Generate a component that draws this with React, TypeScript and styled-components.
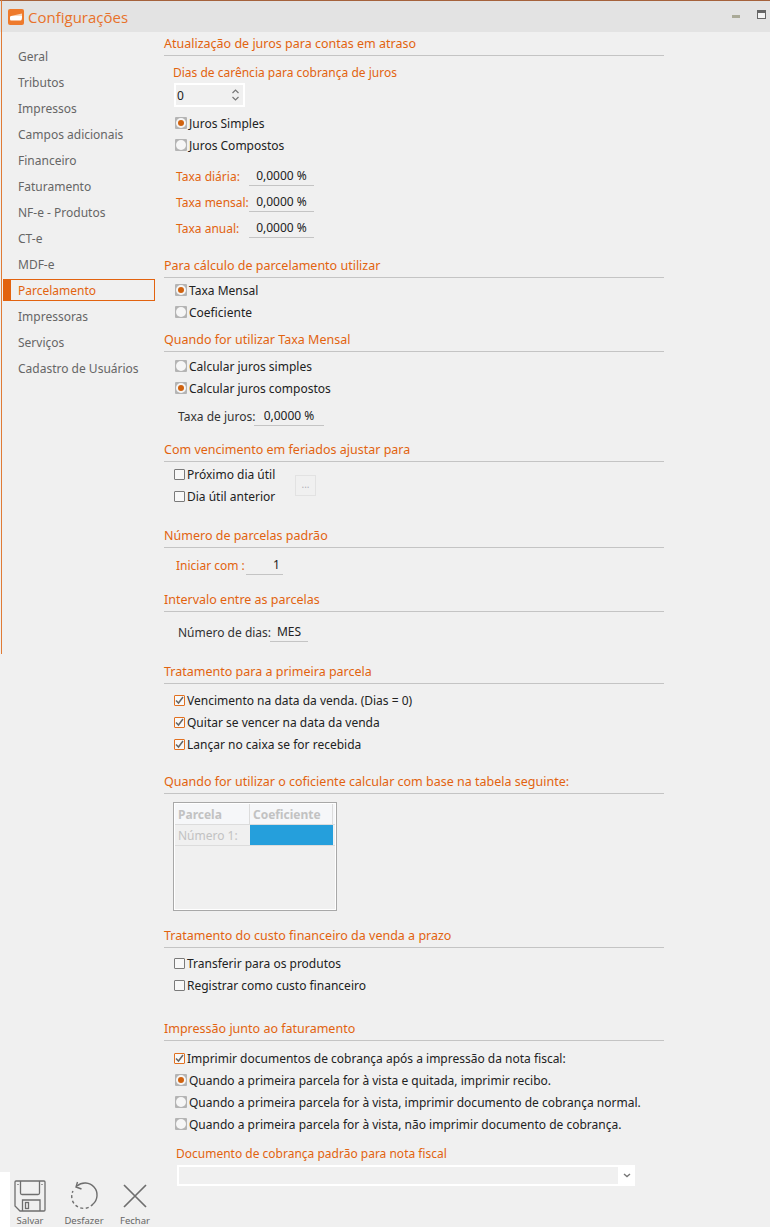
import React from 'react';
import styled, { createGlobalStyle } from 'styled-components';

const orange = '#e2630f';
const fontStack = '"Noto Sans", Verdana, sans-serif';

const GlobalStyle = createGlobalStyle`
  html, body {
    margin: 0;
    padding: 0;
    background: #f0f0f0;
  }
  * {
    box-sizing: border-box;
  }
`;

const Page = styled.div`
  position: relative;
  width: 770px;
  height: 1227px;
  overflow: hidden;
  background: #f0f0f0;
  font-family: ${fontStack};
  font-size: 12px;
  color: #222;
  white-space: nowrap;

  &::before {
    content: '';
    position: absolute;
    left: 1px;
    top: 0;
    width: 1px;
    height: 654px;
    background: #e07b35;
  }
`;

const TitleBar = styled.header`
  display: flex;
  align-items: center;
  height: 32px;
  padding: 0 4px 0 8px;
  background: #e3e3e3;
  border-top: 1px solid #a5623c;
`;

const AppTitle = styled.h1`
  flex: 1;
  margin: 0 0 0 4px;
  font-family: "Open Sans", sans-serif;
  font-size: 15px;
  font-weight: 400;
  color: #e8722a;
`;

const MinimizeButton = styled.span`
  width: 8px;
  height: 3px;
  margin-right: 17px;
  background: #aaaa98;
`;

const MaximizeButton = styled.span`
  width: 9px;
  height: 9px;
  margin-top: -5px;
  border: 1px solid #666;
  border-top-width: 3px;
  background: #f4f4f4;
`;

const Body = styled.div`
  display: flex;
  height: 1140px;
`;

const Sidebar = styled.nav`
  flex: none;
  display: flex;
  flex-direction: column;
  gap: 4px;
  width: 164px;
  padding: 13px 9px 0 3px;
`;

const SideItem = styled.div<{ $active?: boolean }>`
  display: flex;
  align-items: center;
  height: 22px;
  padding-left: ${(p) => (p.$active ? '7px' : '15px')};
  color: ${(p) => (p.$active ? orange : '#666')};
  border: ${(p) => (p.$active ? `1px solid ${orange}` : '0')};
  border-left: ${(p) => (p.$active ? `8px solid ${orange}` : '0')};
`;

const Content = styled.main`
  width: 500px;
`;

const Section = styled.section<{ $h: number }>`
  height: ${(p) => p.$h}px;
`;

const Heading = styled.h2`
  display: flex;
  align-items: center;
  height: 24px;
  margin: 0;
  font-size: 12.5px;
  font-weight: 400;
  color: ${orange};
  border-bottom: 1px solid #c4c4c4;
`;

const Group = styled.div<{ $mt: number }>`
  margin-top: ${(p) => p.$mt}px;
`;

const Line = styled.div<{ $x?: number }>`
  display: flex;
  align-items: center;
  height: 22px;
  padding-left: ${(p) => p.$x ?? 11}px;
`;

const OrangeLabel = styled.span<{ $w?: number }>`
  flex: none;
  width: ${(p) => (p.$w ? `${p.$w}px` : 'auto')};
  color: ${orange};
`;

const DarkLabel = styled.span<{ $w: number }>`
  flex: none;
  width: ${(p) => p.$w}px;
  color: #333;
`;

const Spinner = styled.div`
  display: flex;
  align-items: center;
  justify-content: space-between;
  width: 71px;
  height: 24px;
  margin-left: 10px;
  padding: 0 3px 0 1px;
  border: 2px solid #fff;
  font-size: 12px;
`;

const SpinArrows = styled.svg`
  width: 9px;
  height: 14px;
`;

const RadioMark = styled.span<{ $on?: boolean }>`
  flex: none;
  display: flex;
  align-items: center;
  justify-content: center;
  width: 12px;
  height: 12px;
  margin-right: 2px;
  border-radius: 1px;
  background: #b4b4b4;

  &::after {
    content: '';
    width: ${(p) => (p.$on ? '6px' : '10px')};
    height: ${(p) => (p.$on ? '6px' : '10px')};
    border-radius: 50%;
    background: ${(p) => (p.$on ? '#d0620f' : '#f6f6f6')};
    box-shadow: ${(p) => (p.$on ? '0 0 0 2px #f6f6f6' : 'none')};
  }
`;

const CheckMark = styled.span<{ $on?: boolean }>`
  flex: none;
  display: flex;
  align-items: center;
  justify-content: center;
  width: 11px;
  height: 11px;
  margin-right: 2px;
  border: 1px solid ${(p) => (p.$on ? '#e2701f' : '#7a7a7a')};
  border-radius: 1px;
  background: #f8f8f8;
`;

const FieldValue = styled.span<{ $w: number }>`
  flex: none;
  display: flex;
  align-items: center;
  justify-content: center;
  width: ${(p) => p.$w}px;
  height: 20px;
  font-size: 12px;
  color: #222;
  border-bottom: 1px solid #c4c4c4;
`;

const OffsetDigit = styled.span`
  margin-left: 24px;
`;

const FieldRow = styled.div<{ $x?: number }>`
  display: flex;
  align-items: center;
  height: 26px;
  padding-left: ${(p) => p.$x ?? 12}px;
`;

const HolidayRow = styled.div`
  display: flex;
  align-items: center;
`;

const HolidayOptions = styled.div`
  width: 131px;
`;

const DotsButton = styled.button`
  width: 21px;
  height: 21px;
  padding: 0 0 2px;
  font-family: inherit;
  font-size: 10px;
  color: #b0b0b8;
  background: #f0f0f0;
  border: 1px solid #e2e2e2;
`;

const CoefTable = styled.div`
  width: 164px;
  height: 109px;
  margin-left: 9px;
  border: 1px solid #a8a8a8;
  padding: 1px;
  box-shadow: inset 0 0 0 1px #fff;
`;

const TableRow = styled.div<{ $header?: boolean }>`
  display: grid;
  grid-template-columns: 75px 83px;
  height: 21px;
  background: ${(p) => (p.$header ? '#f6f7f9' : 'transparent')};
  border-bottom: 1px solid #dcdcdc;
`;

const TableCell = styled.div<{ $header?: boolean; $blue?: boolean }>`
  display: flex;
  align-items: center;
  padding-left: 3px;
  font-weight: ${(p) => (p.$header ? 700 : 400)};
  color: #c2c2c2;
  background: ${(p) => (p.$blue ? '#259fdc' : 'transparent')};
  border-right: ${(p) => (p.$header ? '1px solid #dcdcdc' : '0')};
`;

const DocSelect = styled.div`
  display: flex;
  justify-content: flex-end;
  width: 458px;
  height: 21px;
  margin: 1px 0 0 13px;
  border: 2px solid #fff;
`;

const SelectArrow = styled.div`
  display: flex;
  align-items: center;
  justify-content: center;
  width: 17px;
  margin: -2px -2px -2px 0;
  background: #fff;
`;

const Footer = styled.footer`
  display: flex;
  height: 55px;
  border-left: 10px solid #fff;
`;

const ToolButton = styled.div<{ $w: number }>`
  display: flex;
  flex-direction: column;
  align-items: center;
  width: ${(p) => p.$w}px;
`;

const IconSlot = styled.div`
  display: flex;
  align-items: center;
  justify-content: center;
  height: 42px;
  padding-top: 5px;
`;

const ToolLabel = styled.span`
  margin-top: 0;
  font-size: 9.5px;
  color: #666;
`;

const AppIcon = () => (
  <svg width="16" height="16" viewBox="0 0 16 16">
    <rect width="16" height="16" rx="2" fill="#ee7a2c" />
    <path d="M3 7 L14 4.5 V9 H3 Z" fill="#f8d9c0" />
    <path d="M2 8 Q2 7 3.5 7 H14 Q14 11 13 11.5 H3 Q2 11.5 2 10 Z" fill="#fff" />
  </svg>
);

const Radio = ({ on, children }: { on?: boolean; children: React.ReactNode }) => (
  <Line $x={11}>
    <RadioMark $on={on} />
    {children}
  </Line>
);

const Check = ({ on, children }: { on?: boolean; children: React.ReactNode }) => (
  <Line $x={10}>
    <CheckMark $on={on}>
      {on && (
        <svg width="9" height="9" viewBox="0 0 9 9">
          <path d="M1 4.5 L3.5 7 L8 1" fill="none" stroke="#666" strokeWidth="1.5" />
        </svg>
      )}
    </CheckMark>
    {children}
  </Line>
);

const menu = [
  'Geral', 'Tributos', 'Impressos', 'Campos adicionais', 'Financeiro', 'Faturamento',
  'NF-e - Produtos', 'CT-e', 'MDF-e', 'Parcelamento', 'Impressoras', 'Serviços', 'Cadastro de Usuários',
];

const taxas = ['Taxa diária:', 'Taxa mensal:', 'Taxa anual:'];

export default function App() {
  return (
    <Page>
      <GlobalStyle />
      <TitleBar>
        <AppIcon />
        <AppTitle>Configurações</AppTitle>
        <MinimizeButton />
        <MaximizeButton />
      </TitleBar>
      <Body>
        <Sidebar>
          {menu.map((m) => (
            <SideItem key={m} $active={m === 'Parcelamento'}>{m}</SideItem>
          ))}
        </Sidebar>
        <Content>
          <Section $h={222}>
            <Heading>Atualização de juros para contas em atraso</Heading>
            <Group $mt={5}>
              <Line $x={9}><OrangeLabel>Dias de carência para cobrança de juros</OrangeLabel></Line>
              <Spinner>
                0
                <SpinArrows viewBox="0 0 9 14">
                  <path d="M1.5 5 L4.5 2 L7.5 5 M1.5 9 L4.5 12 L7.5 9" fill="none" stroke="#777" strokeWidth="1.2" />
                </SpinArrows>
              </Spinner>
            </Group>
            <Group $mt={5}>
              <Radio on>Juros Simples</Radio>
              <Radio>Juros Compostos</Radio>
            </Group>
            <Group $mt={7}>
              {taxas.map((t) => (
                <FieldRow key={t}>
                  <OrangeLabel $w={73}>{t}</OrangeLabel>
                  <FieldValue $w={65}>0,0000 %</FieldValue>
                </FieldRow>
              ))}
            </Group>
          </Section>

          <Section $h={74}>
            <Heading>Para cálculo de parcelamento utilizar</Heading>
            <Group $mt={1}>
              <Radio on>Taxa Mensal</Radio>
              <Radio>Coeficiente</Radio>
            </Group>
          </Section>

          <Section $h={110}>
            <Heading>Quando for utilizar Taxa Mensal</Heading>
            <Group $mt={3}>
              <Radio>Calcular juros simples</Radio>
              <Radio on>Calcular juros compostos</Radio>
            </Group>
            <Group $mt={4}>
              <FieldRow $x={14}>
                <DarkLabel $w={76}>Taxa de juros:</DarkLabel>
                <FieldValue $w={70}>0,0000 %</FieldValue>
              </FieldRow>
            </Group>
          </Section>

          <Section $h={86}>
            <Heading>Com vencimento em feriados ajustar para</Heading>
            <Group $mt={1}>
              <HolidayRow>
                <HolidayOptions>
                  <Check>Próximo dia útil</Check>
                  <Check>Dia útil anterior</Check>
                </HolidayOptions>
                <DotsButton>...</DotsButton>
              </HolidayRow>
            </Group>
          </Section>

          <Section $h={64}>
            <Heading>Número de parcelas padrão</Heading>
            <Group $mt={4}>
              <FieldRow>
                <OrangeLabel $w={70}>Iniciar com :</OrangeLabel>
                <FieldValue $w={37}><OffsetDigit>1</OffsetDigit></FieldValue>
              </FieldRow>
            </Group>
          </Section>

          <Section $h={72}>
            <Heading>Intervalo entre as parcelas</Heading>
            <Group $mt={7}>
              <FieldRow $x={14}>
                <DarkLabel $w={92}>Número de dias:</DarkLabel>
                <FieldValue $w={38}>MES</FieldValue>
              </FieldRow>
            </Group>
          </Section>

          <Section $h={110}>
            <Heading>Tratamento para a primeira parcela</Heading>
            <Group $mt={5}>
              <Check on>Vencimento na data da venda. (Dias = 0)</Check>
              <Check on>Quitar se vencer na data da venda</Check>
              <Check on>Lançar no caixa se for recebida</Check>
            </Group>
          </Section>

          <Section $h={154}>
            <Heading>Quando for utilizar o coficiente calcular com base na tabela seguinte:</Heading>
            <Group $mt={8}>
              <CoefTable>
                <TableRow $header>
                  <TableCell $header>Parcela</TableCell>
                  <TableCell $header>Coeficiente</TableCell>
                </TableRow>
                <TableRow>
                  <TableCell>Número 1:</TableCell>
                  <TableCell $blue />
                </TableRow>
              </CoefTable>
            </Group>
          </Section>

          <Section $h={93}>
            <Heading>Tratamento do custo financeiro da venda a prazo</Heading>
            <Group $mt={4}>
              <Check>Transferir para os produtos</Check>
              <Check>Registrar como custo financeiro</Check>
            </Group>
          </Section>

          <Section $h={155}>
            <Heading>Impressão junto ao faturamento</Heading>
            <Group $mt={6}>
              <Check on>Imprimir documentos de cobrança após a impressão da nota fiscal:</Check>
              <Radio on>Quando a primeira parcela for à vista e quitada, imprimir recibo.</Radio>
              <Radio>Quando a primeira parcela for à vista, imprimir documento de cobrança normal.</Radio>
              <Radio>Quando a primeira parcela for à vista, não imprimir documento de cobrança.</Radio>
            </Group>
            <Group $mt={7}>
              <Line $x={12}><OrangeLabel>Documento de cobrança padrão para nota fiscal</OrangeLabel></Line>
              <DocSelect>
                <SelectArrow>
                  <svg width="8" height="5" viewBox="0 0 8 5">
                    <path d="M1 1 L4 3.5 L7 1" fill="none" stroke="#777" strokeWidth="1.4" />
                  </svg>
                </SelectArrow>
              </DocSelect>
            </Group>
          </Section>
        </Content>
      </Body>
      <Footer>
        <ToolButton $w={40}>
          <IconSlot>
            <svg width="32" height="32" viewBox="0 0 32 32" fill="none" stroke="#6e6e6e" strokeWidth="1.3">
              <path d="M2 1 H30 Q31 1 31 2 V30 Q31 31 30 31 H6 L1 26 V2 Q1 1 2 1 Z" />
              <path d="M6.5 1 V13 Q6.5 14.5 8 14.5 H24 Q25.5 14.5 25.5 13 V1" />
              <path d="M8.5 31 V20 H26 V31" />
              <rect x="11.5" y="22.5" width="3" height="6" />
              <path d="M4 4 V5 M28 4 V5" />
            </svg>
          </IconSlot>
          <ToolLabel>Salvar</ToolLabel>
        </ToolButton>
        <ToolButton $w={68}>
          <IconSlot>
            <svg width="30" height="30" viewBox="0 0 30 30" fill="none" stroke="#6e6e6e" strokeWidth="1.4">
              <path d="M8 5 A12 12 0 0 1 24 23" />
              <path d="M24 23 A12 12 0 0 1 4 10" strokeDasharray="3 2.5" />
              <path d="M8.5 1 L7 6 L12.5 8" />
            </svg>
          </IconSlot>
          <ToolLabel>Desfazer</ToolLabel>
        </ToolButton>
        <ToolButton $w={34}>
          <IconSlot>
            <svg width="24" height="24" viewBox="0 0 24 24" fill="none" stroke="#6e6e6e" strokeWidth="1.7">
              <path d="M1 1 L23 23 M23 1 L1 23" />
            </svg>
          </IconSlot>
          <ToolLabel>Fechar</ToolLabel>
        </ToolButton>
      </Footer>
    </Page>
  );
}
